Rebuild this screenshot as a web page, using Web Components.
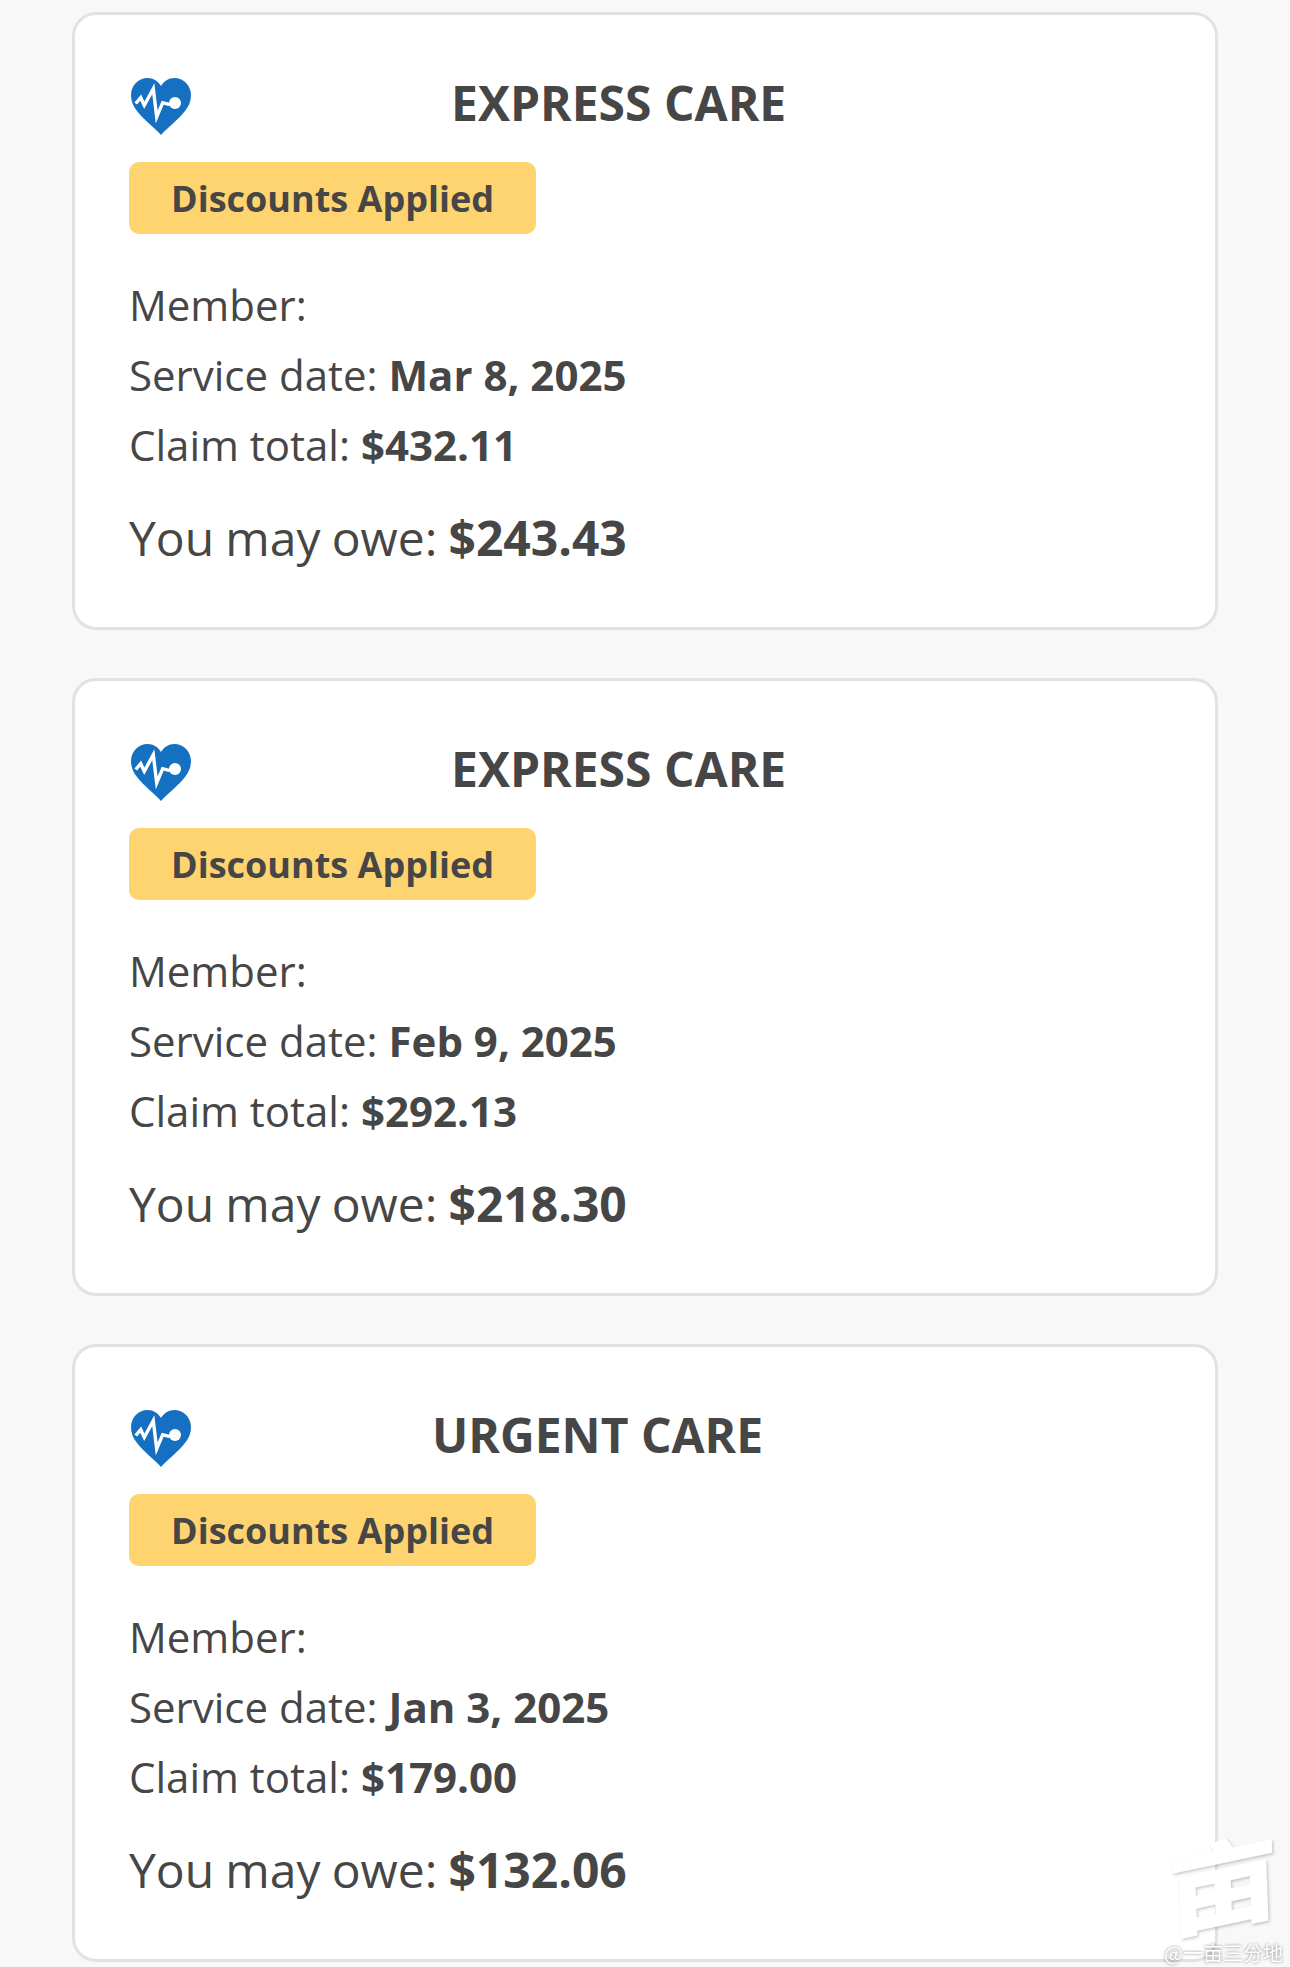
<!DOCTYPE html>
<html><head><meta charset="utf-8"><title>Claims</title>
<style>
html,body{margin:0;padding:0;background:#f8f8f8}
body{width:1290px;height:1967px;overflow:hidden;font-family:"Open Sans","Noto Sans",sans-serif;color:#464646;position:relative}
claim-list{display:flex}
</style></head><body>
<claim-list>
<claim-card title-text="EXPRESS CARE" offset="260" date="Mar 8, 2025" total="$432.11" owe="$243.43"></claim-card>
<claim-card title-text="EXPRESS CARE" offset="260" date="Feb 9, 2025" total="$292.13" owe="$218.30"></claim-card>
<claim-card title-text="URGENT CARE" offset="241" date="Jan 3, 2025" total="$179.00" owe="$132.06"></claim-card>
</claim-list>
<water-mark></water-mark>
<script>
class HeartIcon extends HTMLElement{constructor(){super();this.attachShadow({mode:'open'}).innerHTML=`<style>:host{display:block;width:60px;height:57px;flex:none}svg{display:block}</style>
<svg width="60" height="57" viewBox="0 0 60 57"><path d="M30 57 C24 50 12 41 6 33 C2 28 0 23 0 17 C0 7 8 0 16.5 0 C22.5 0 27 3 30 8 C33 3 37.5 0 43.5 0 C52 0 60 7 60 17 C60 23 58 28 54 33 C48 41 36 50 30 57Z" fill="#1570c2"/>
<path d="M4.7 25.5 L9.7 19.7 L13.3 27.3 L22.3 10.7 L25.7 39 L31.7 24.7 L39 26.7" fill="none" stroke="#fff" stroke-width="3.4"/>
<circle cx="44" cy="25" r="6" fill="#fff"/></svg>`}}
customElements.define('heart-icon',HeartIcon);
class InfoLine extends HTMLElement{constructor(){super();this.attachShadow({mode:'open'}).innerHTML=`<style>:host{display:block;font-size:var(--size,42px);line-height:var(--lh,70px);word-spacing:var(--ws,0);white-space:nowrap}::slotted(b){font-weight:700}</style><slot></slot>`}}
customElements.define('info-line',InfoLine);
class ClaimCard extends HTMLElement{connectedCallback(){if(this.shadowRoot)return;const a=n=>this.getAttribute(n);
this.attachShadow({mode:'open'}).innerHTML=`<style>
:host{display:block;box-sizing:border-box;height:618px;background:#fff;border:3px solid #e2e2e2;border-radius:24px;padding:63px 54px 0 54px}
.head{display:flex;align-items:center;height:57px;padding-left:2px}
h2{margin:0 0 0 ${a('offset')}px;font-size:48px;font-weight:700;line-height:57px;white-space:nowrap;position:relative;top:-4px}
.badge{display:flex;align-items:center;justify-content:center;width:407px;height:72px;margin-top:27px;background:#fed471;border-radius:10px;font-size:36px;font-weight:700}
.info{margin-top:36px}
.owe{--size:48px;--lh:70px;--ws:-1.3px;margin-top:23px}
</style>
<div class="head"><heart-icon></heart-icon><h2>${a('title-text')}</h2></div>
<div class="badge">Discounts Applied</div>
<div class="info">
<info-line>Member:</info-line>
<info-line>Service date: <b>${a('date')}</b></info-line>
<info-line>Claim total: <b>${a('total')}</b></info-line>
<info-line class="owe">You may owe: <b>${a('owe')}</b></info-line>
</div>`}}
customElements.define('claim-card',ClaimCard);
class ClaimList extends HTMLElement{constructor(){super();this.attachShadow({mode:'open'}).innerHTML=`<style>:host{display:flex;flex-direction:column;gap:48px;padding:12px 72px 0 72px}</style><slot></slot>`}}
customElements.define('claim-list',ClaimList);
class WaterMark extends HTMLElement{constructor(){super();this.attachShadow({mode:'open'}).innerHTML=`<style>
:host{position:absolute;left:1130px;top:1820px;width:160px;height:147px;pointer-events:none;font-family:"Noto Sans CJK SC",sans-serif}
.big{position:absolute;left:42px;top:0;font-size:102px;line-height:118px;font-weight:900;color:#fff;text-shadow:1px 2px 3px rgba(0,0,0,.22);transform:rotate(-12deg) skewX(-10deg) scale(1.12,.93)}
.small{position:absolute;left:34px;top:121px;font-size:20px;line-height:24px;color:#fff;white-space:nowrap;text-shadow:0 0 3px rgba(0,0,0,.5)}
</style><div class="big">亩</div><div class="small">@一亩三分地</div>`}}
customElements.define('water-mark',WaterMark);
</script>
</body></html>
